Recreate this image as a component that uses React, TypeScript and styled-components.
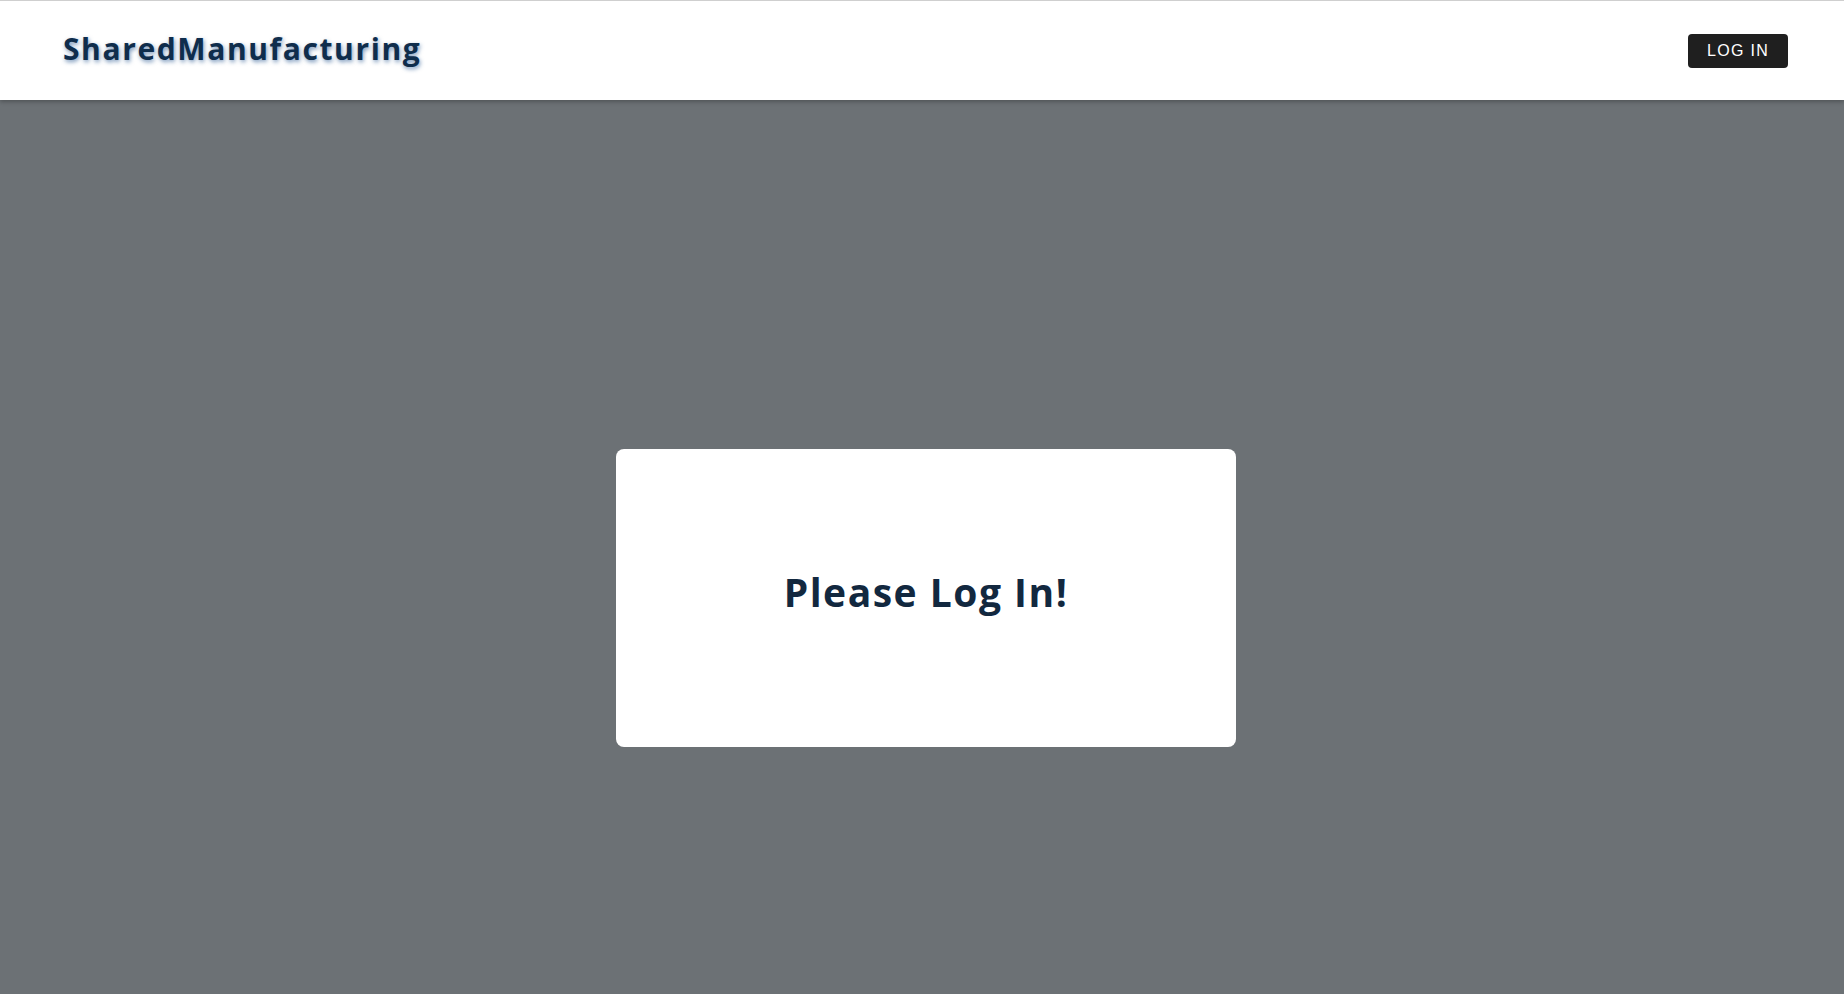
import React from "react";
import styled, { createGlobalStyle } from "styled-components";

const GlobalStyle = createGlobalStyle`
  html, body { margin: 0; padding: 0; }
  body {
    background: #6c7175;
    font-family: "Open Sans", "Liberation Sans", sans-serif;
  }
  * { box-sizing: border-box; }
`;

const Page = styled.div`
  min-height: 994px;
  display: flex;
  flex-direction: column;
  background: #6c7175;
`;

const Header = styled.header`
  height: 100px;
  background: #ffffff;
  border-top: 1px solid #cfcfcf;
  display: flex;
  align-items: center;
  justify-content: space-between;
  padding: 0 56px 0 63px;
  box-shadow: 0 2px 4px rgba(0, 0, 0, 0.25);
  position: relative;
  z-index: 1;
`;

const Logo = styled.div`
  font-family: "Open Sans", sans-serif;
  font-weight: 700;
  font-size: 30px;
  letter-spacing: 1.6px;
  color: #0f2d4c;
  text-shadow: 1px 2px 4px rgba(30, 80, 140, 0.6);
  margin-top: -5px;
`;

const LoginButton = styled.button`
  width: 100px;
  height: 34px;
  background: #1f1f1f;
  color: #ffffff;
  border: none;
  border-radius: 4px;
  font-family: "Liberation Sans", Arial, sans-serif;
  font-size: 16px;
  letter-spacing: 1.3px;
  padding: 0;
  cursor: pointer;
`;

const Main = styled.main`
  flex: 1;
  display: flex;
  justify-content: center;
  align-items: flex-start;
  padding-top: 349px;
  padding-left: 8px;
`;

const Card = styled.div`
  width: 620px;
  height: 298px;
  background: #ffffff;
  border-radius: 8px;
  display: flex;
  align-items: center;
  justify-content: center;
  padding-bottom: 14px;
`;

const Title = styled.h1`
  margin: 0;
  font-family: "Open Sans", sans-serif;
  font-weight: 700;
  font-size: 39px;
  letter-spacing: 1.5px;
  color: #12283f;
`;

export default function App() {
  return (
    <>
      <GlobalStyle />
      <Page>
        <Header>
          <Logo>SharedManufacturing</Logo>
          <LoginButton>LOG IN</LoginButton>
        </Header>
        <Main>
          <Card>
            <Title>Please Log In!</Title>
          </Card>
        </Main>
      </Page>
    </>
  );
}
